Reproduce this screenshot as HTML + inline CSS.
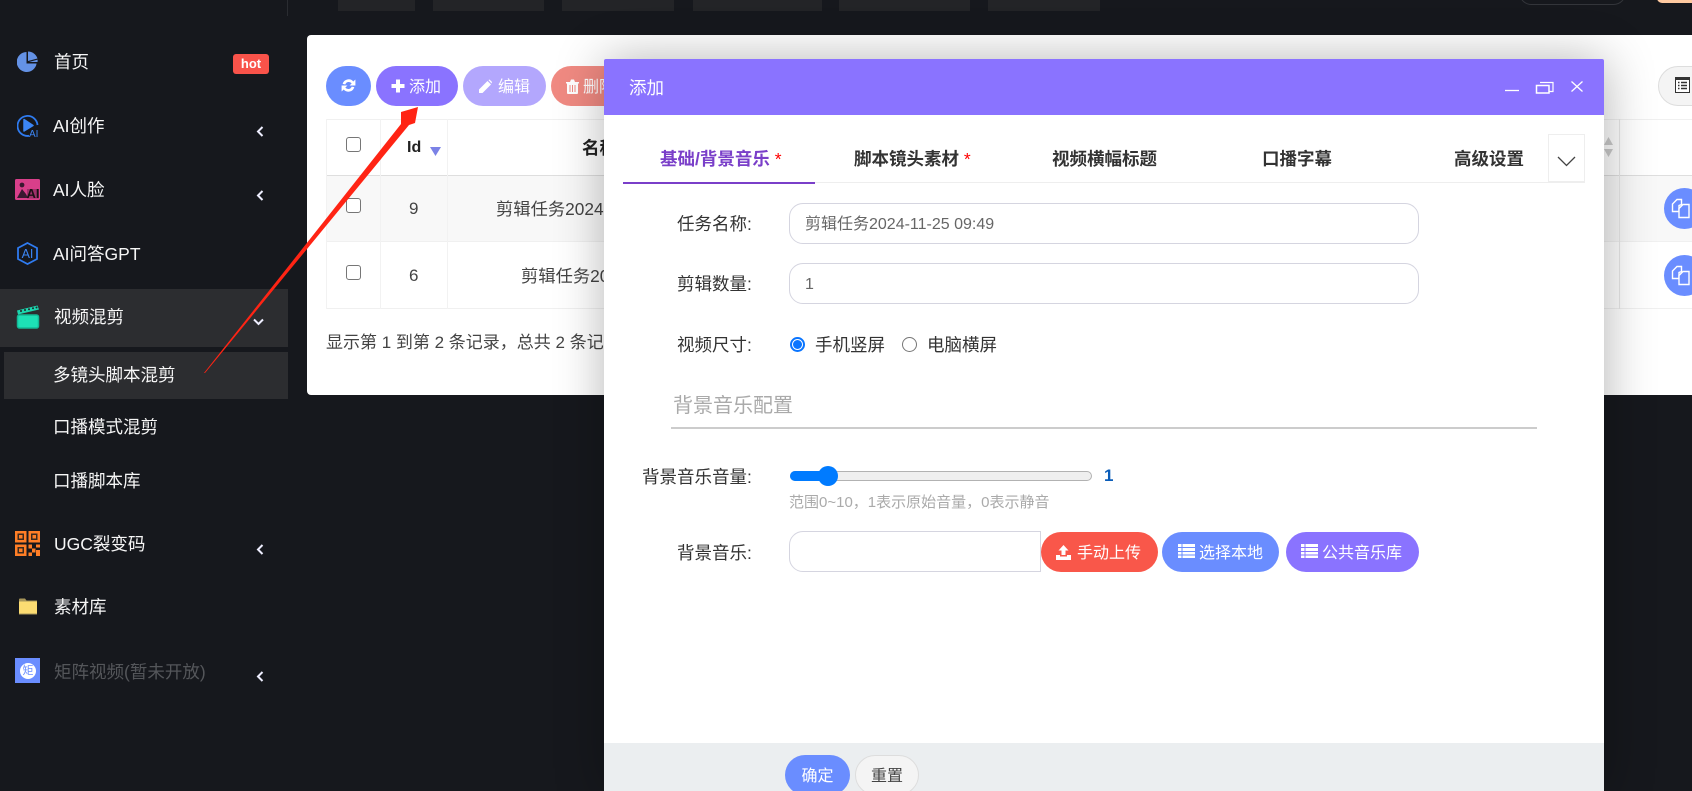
<!DOCTYPE html>
<html lang="zh-CN">
<head>
<meta charset="utf-8">
<title>添加</title>
<style>
*{box-sizing:border-box}
html,body{margin:0;padding:0;width:1692px;height:791px;overflow:hidden;background:#16181d;font-family:"Liberation Sans","Noto Sans CJK SC",sans-serif}
#root{position:absolute;left:0;top:0;width:1692px;height:791px;overflow:hidden;background:#16181d}
.a{position:absolute}
.t{position:absolute;white-space:nowrap;line-height:24px;height:24px}
.s{font-size:17.5px;color:#f6f6f6}
.l{font-size:17.5px;color:#333}
.c{position:absolute;width:15px;height:15px;border:1.5px solid #767676;border-radius:3px;background:#fff;left:346px}
.h{position:absolute;height:1px;background:#e6e6e6}
.b{position:absolute;height:40px;border-radius:20px;color:#fff;font-size:16px;line-height:43px;white-space:nowrap}
.b svg{position:absolute}
.ip{position:absolute;background:#fff;border:1px solid #d5d5e0}
.chev{position:absolute}
.tab{position:absolute;top:147px;font-size:17.5px;font-weight:700;line-height:24px;color:#333;white-space:nowrap}
</style>
</head>
<body>
<div id="root">
<!-- top bar remnants -->
<div class="a" style="left:287px;top:0;width:1px;height:16px;background:#2a2c31"></div>
<div class="a" style="left:338px;top:0;width:77px;height:11px;background:#232427"></div>
<div class="a" style="left:433px;top:0;width:111px;height:11px;background:#232427"></div>
<div class="a" style="left:562px;top:0;width:112px;height:11px;background:#232427"></div>
<div class="a" style="left:693px;top:0;width:129px;height:11px;background:#232427"></div>
<div class="a" style="left:839px;top:0;width:131px;height:11px;background:#232427"></div>
<div class="a" style="left:988px;top:0;width:112px;height:11px;background:#232427"></div>
<div class="a" style="left:1519px;top:-20px;width:107px;height:25px;border:1px solid #33353a;border-radius:14px"></div>
<div class="a" style="left:1657px;top:-10px;width:50px;height:13px;background:#ffc9a0;border-radius:5px"></div>

<!-- sidebar -->
<div class="a" style="left:0;top:289px;width:288px;height:58px;background:#2c2d30"></div>
<div class="a" style="left:4px;top:352px;width:284px;height:47px;background:#2c2d30"></div>

<svg class="a" style="left:17px;top:51px" width="21" height="21" viewBox="0 0 21 21"><path d="M9.500 1A10 10 0 1 0 19.600 12.500H9.500Z" fill="#6492e6"/><path d="M11 0.500A10 10 0 0 1 20.500 7.500L11 10Z" fill="#6492e6"/><path d="M12 11L20.600 8.600A10 10 0 0 1 20.500 11Z" fill="#6492e6"/></svg>
<span class="t s" style="left:54px;top:50px">首页</span>
<div class="a" style="left:233px;top:54px;width:36px;height:20px;background:#f9534a;border-radius:3px;color:#fff;font-size:13px;font-weight:700;line-height:20px;text-align:center">hot</div>

<svg class="a" style="left:17px;top:114px" width="23" height="24" viewBox="0 0 23 24"><path d="M12 21.800A10 10 0 1 1 20.500 11" fill="none" stroke="#2f7bf0" stroke-width="1.800"/><path d="M7 5.500L16 11.500L7 17Z" fill="#3c86f5" stroke="#3c86f5" stroke-width="1.500" stroke-linejoin="round"/><text x="12" y="23" font-size="10" fill="#3c86f5" font-family="Liberation Sans">AI</text></svg>
<span class="t s" style="left:53px;top:114px">AI创作</span>

<svg class="a" style="left:15px;top:179px" width="25" height="21" viewBox="0 0 25 21"><rect width="25" height="21" rx="1.500" fill="#d83f8a"/><circle cx="7" cy="6" r="2.400" fill="#3a1830"/><path d="M2 19L7 10L11 15L13 19Z" fill="#3a1830"/><path d="M12 10H24V19.500H12Z" fill="#3a1830" opacity=".35"/><text x="11.500" y="19" font-size="13" font-weight="700" fill="#1a1014" font-family="Liberation Sans">AI</text></svg>
<span class="t s" style="left:53px;top:178px">AI人脸</span>

<svg class="a" style="left:17px;top:242px" width="21" height="23" viewBox="0 0 21 23"><path d="M10.500 1L20 6V17L10.500 22L1 17V6Z" fill="none" stroke="#2f7bf0" stroke-width="1.800"/><text x="4.600" y="16" font-size="12.500" fill="#3c86f5" font-family="Liberation Sans">AI</text></svg>
<span class="t s" style="left:53px;top:242px">AI问答GPT</span>

<svg class="a" style="left:16px;top:305px" width="24" height="24" viewBox="0 0 24 24"><path d="M1 5.500L21.500 .5L23 4.500L2 9.500Z" fill="#1bd6ae"/><rect x="1.500" y="10" width="21" height="13" rx="2" fill="#1de0b6" stroke="#14b896" stroke-width="1.500"/><g fill="#24262a"><circle cx="5" cy="6" r="1"/><circle cx="9" cy="5" r="1"/><circle cx="13" cy="4.200" r="1"/><circle cx="17" cy="3.200" r="1"/><circle cx="20.500" cy="2.500" r="1"/></g></svg>
<span class="t s" style="left:54px;top:305px">视频混剪</span>
<span class="t s" style="left:53px;top:363px">多镜头脚本混剪</span>
<span class="t s" style="left:53px;top:415px">口播模式混剪</span>
<span class="t s" style="left:53px;top:469px">口播脚本库</span>

<svg class="a" style="left:15px;top:531px" width="25" height="25" viewBox="0 0 25 25"><rect width="11.500" height="11.500" fill="#ff7e26"/><rect x="13.500" width="11.500" height="11.500" fill="#ff7e26"/><rect y="13.500" width="11.500" height="11.500" fill="#ff7e26"/><g fill="#3a2a1e"><rect x="2.500" y="2.500" width="6.500" height="6.500"/><rect x="16" y="2.500" width="6.500" height="6.500"/><rect x="2.500" y="16" width="6.500" height="6.500"/></g><g fill="#ff7e26"><rect x="4" y="4" width="3.500" height="3.500"/><rect x="17.500" y="4" width="3.500" height="3.500"/><rect x="4" y="17.500" width="3.500" height="3.500"/><rect x="13.500" y="13.500" width="3.500" height="4"/><rect x="21" y="13.500" width="4" height="3"/><rect x="17" y="17.500" width="3.500" height="4"/><rect x="13.500" y="21.500" width="3.500" height="3.500"/><rect x="21" y="19" width="4" height="6"/></g></svg>
<span class="t s" style="left:54px;top:532px">UGC裂变码</span>

<svg class="a" style="left:19px;top:598px" width="18" height="17" viewBox="0 0 18 17"><path d="M0 1.500Q0 .5 1 .5H6L7.500 2.500H18V16.500H0Z" fill="#a8965a"/><path d="M0 3.500H18V15.500H0Z" fill="#fcdc72"/></svg>
<span class="t s" style="left:54px;top:595px">素材库</span>

<div class="a" style="left:15px;top:658px;width:25px;height:25px;background:#6a8dff"></div>
<div class="a" style="left:20px;top:663px;width:16px;height:16px;border-radius:50%;background:#fff;color:#6a8dff;font-size:11px;line-height:16px;text-align:center">矩</div>
<span class="t" style="left:54px;top:660px;font-size:17.5px;color:#54565a">矩阵视频(暂未开放)</span>

<svg class="chev" style="left:256px;top:126px" width="8" height="11" viewBox="0 0 8 11"><path d="M6.500 1L2 5.500L6.500 10" fill="none" stroke="#eef" stroke-width="2"/></svg>
<svg class="chev" style="left:256px;top:190px" width="8" height="11" viewBox="0 0 8 11"><path d="M6.500 1L2 5.500L6.500 10" fill="none" stroke="#eef" stroke-width="2"/></svg>
<svg class="chev" style="left:253px;top:318px" width="11" height="8" viewBox="0 0 11 8"><path d="M1 1.500L5.500 6L10 1.500" fill="none" stroke="#eef" stroke-width="2"/></svg>
<svg class="chev" style="left:256px;top:544px" width="8" height="11" viewBox="0 0 8 11"><path d="M6.500 1L2 5.500L6.500 10" fill="none" stroke="#eef" stroke-width="2"/></svg>
<svg class="chev" style="left:256px;top:671px" width="8" height="11" viewBox="0 0 8 11"><path d="M6.500 1L2 5.500L6.500 10" fill="none" stroke="#eef" stroke-width="2"/></svg>

<!-- main card -->
<div class="a" style="left:307px;top:35px;width:1400px;height:360px;background:#fff;border-radius:4px"></div>

<!-- toolbar -->
<div class="b" style="left:326px;top:66px;width:45px;background:#6a8dff"><svg style="left:14px;top:11px" width="17" height="17" viewBox="0 0 16 16"><path d="M2.500 6.500A5.800 5.800 0 0 1 12.500 4.200L14.500 2.300V8H9L11 6A3.500 3.500 0 0 0 5 7Z" fill="#fff"/><path d="M13.500 9.500A5.800 5.800 0 0 1 3.500 11.800L1.500 13.700V8H7L5 10A3.500 3.500 0 0 0 11 9Z" fill="#fff"/></svg></div>
<div class="b" style="left:376px;top:66px;width:82px;background:#8a73ff"><svg style="left:15px;top:13px" width="14" height="14" viewBox="0 0 14 14"><path d="M5 0.500H9V5H13.500V9H9V13.500H5V9H.5V5H5Z" fill="#fff"/></svg><span class="a" style="left:33px">添加</span></div>
<div class="b" style="left:463px;top:66px;width:83px;background:#b3a7fd"><svg style="left:15px;top:13px" width="14" height="15" viewBox="0 0 14 15"><path d="M1 10.500L9.500 2L13 5.500L4.500 14H1Z" fill="#fff"/><path d="M10.500 1L11.500 .5L14 3L13.500 4.500Z" fill="#fff"/></svg><span class="a" style="left:35px">编辑</span></div>
<div class="b" style="left:551px;top:66px;width:90px;background:#f08a82"><svg style="left:15px;top:13px" width="13" height="15" viewBox="0 0 13 15"><path d="M0 3H13V4.500H12V14Q12 15 11 15H2Q1 15 1 14V4.500H0ZM4 3L5 .5H8L9 3ZM3.500 6V13H4.500V6ZM6 6V13H7V6ZM8.500 6V13H9.500V6Z" fill="#fff" fill-rule="evenodd"/></svg><span class="a" style="left:32px">删除</span></div>

<div class="a" style="left:1658px;top:66px;width:60px;height:40px;border-radius:20px;background:#f4f4f4;border:1px solid #ddd"></div>
<svg class="a" style="left:1675px;top:77px" width="15" height="16" viewBox="0 0 15 16"><rect x=".5" y=".5" width="14" height="15" fill="#fff" stroke="#333"/><rect width="15" height="3" fill="#333"/><path d="M3 5.500H4.500M6 5.500H12M3 8.500H4.500M6 8.500H12M3 11.500H4.500M6 11.500H12" stroke="#333" stroke-width="1.500"/></svg>

<!-- table -->
<div class="a" style="left:326px;top:175px;width:1380px;height:66px;background:#f8f8f8"></div>
<div class="h" style="left:326px;top:175px;width:1380px;height:1px;background:#dedede"></div>
<div class="h" style="left:326px;top:241px;width:1380px;background:#f0f0f0"></div>
<div class="a" style="left:326px;top:308px;width:1380px;height:1px;background:#f0f0f0"></div>
<div class="a" style="left:326px;top:119px;width:1380px;height:1px;background:#f0f0f0"></div>
<div class="a" style="left:326px;top:119px;width:1px;height:190px;background:#f2f2f2"></div>
<div class="a" style="left:380px;top:119px;width:1px;height:190px;background:#f2f2f2"></div>
<div class="a" style="left:447px;top:119px;width:1px;height:190px;background:#f2f2f2"></div>
<div class="a" style="left:1619px;top:119px;width:1px;height:190px;background:#e8e8e8"></div>
<div class="c" style="top:137px"></div>
<div class="c" style="top:198px"></div>
<div class="c" style="top:265px"></div>
<span class="t" style="left:407px;top:136px;font-size:16px;font-weight:700;color:#222">Id</span>
<svg class="a" style="left:430px;top:147px" width="11" height="9" viewBox="0 0 11 9"><path d="M0 0H11L5.500 9Z" fill="#7b82e6"/></svg>
<span class="t" style="left:582px;top:136px;font-size:17.5px;font-weight:700;color:#222">名称</span>
<span class="t" style="left:409px;top:197px;font-size:17px;color:#444">9</span>
<span class="t" style="left:409px;top:264px;font-size:17px;color:#444">6</span>
<span class="t" style="left:496px;top:197px;font-size:17.3px;color:#444">剪辑任务2024-11-25 09:49</span>
<span class="t" style="left:521px;top:264px;font-size:17.3px;color:#444">剪辑任务2024</span>
<span class="t" style="left:326px;top:331px;font-size:17px;color:#444">显示第 1 到第 2 条记录，总共 2 条记录</span>
<svg class="a" style="left:1603px;top:137px" width="11" height="20" viewBox="0 0 11 20"><path d="M5.500 0L10 8H1ZM5.500 20L1 12H10Z" fill="#ccc"/></svg>
<div class="a" style="left:1664px;top:188px;width:41px;height:41px;border-radius:50%;background:#6a8dff"></div>
<div class="a" style="left:1664px;top:255px;width:41px;height:41px;border-radius:50%;background:#6a8dff"></div>
<svg class="a" style="left:1671px;top:198px" width="20" height="21" viewBox="0 0 20 21"><path d="M1.500 13.500V6L6 1.500H10.500V6.500L8 7.500V13.500Z" fill="none" stroke="#fff" stroke-width="1.400"/><path d="M8 10.500L12 6.500H18V19.500H8Z" fill="#6a8dff" stroke="#fff" stroke-width="1.400"/></svg>
<svg class="a" style="left:1671px;top:265px" width="20" height="21" viewBox="0 0 20 21"><path d="M1.500 13.500V6L6 1.500H10.500V6.500L8 7.500V13.500Z" fill="none" stroke="#fff" stroke-width="1.400"/><path d="M8 10.500L12 6.500H18V19.500H8Z" fill="#6a8dff" stroke="#fff" stroke-width="1.400"/></svg>

<!-- red arrow -->
<svg class="a" style="left:0;top:0" width="1692" height="791" viewBox="0 0 1692 791"><path d="M204 373L401 124L401 112L418 107L415 123L409 125L205 373Z" fill="#ff2414"/></svg>

<!-- modal -->
<div class="a" style="left:604px;top:59px;width:1000px;height:732px;background:#fff;border-radius:2px 2px 0 0;box-shadow:1px 1px 50px rgba(0,0,0,.3)"></div>
<div class="a" style="left:604px;top:59px;width:1000px;height:56px;background:#8a73ff;border-radius:2px 2px 0 0"></div>
<span class="t" style="left:629px;top:76px;font-size:17.5px;color:#fff">添加</span>
<svg class="a" style="left:1500px;top:78px" width="95" height="20" viewBox="0 0 95 20"><path d="M5 12.500H19" stroke="#fff" stroke-width="1.300"/><path d="M36.500 7.500H49V15H36.500Z" fill="none" stroke="#fff" stroke-width="1.500"/><path d="M40 4.500H53V13.500H49.500" fill="none" stroke="#fff" stroke-width="1.200"/><path d="M71.500 3.500L82.500 13.500M82.500 3.500L71.500 13.500" stroke="#fff" stroke-width="1.300"/></svg>

<!-- tabs -->
<div class="a" style="left:623px;top:182px;width:962px;height:1px;background:#eee"></div>
<div class="a" style="left:623px;top:182px;width:192px;height:1.500px;background:#7a3fc9"></div>
<span class="tab" style="left:660px;color:#7a3fc9">基础/背景音乐 <span style="color:#f00;font-weight:400">*</span></span>
<span class="tab" style="left:854px">脚本镜头素材 <span style="color:#f00;font-weight:400">*</span></span>
<span class="tab" style="left:1052px">视频横幅标题</span>
<span class="tab" style="left:1262px">口播字幕</span>
<span class="tab" style="left:1454px">高级设置</span>
<div class="a" style="left:1548px;top:134px;width:37px;height:48px;border:1px solid #eee;background:#fff"></div>
<svg class="a" style="left:1557px;top:156px" width="19" height="11" viewBox="0 0 19 11"><path d="M1 1L9.500 9.500L18 1" fill="none" stroke="#444" stroke-width="1.300"/></svg>

<!-- form -->
<span class="t l" style="left:677px;top:212px">任务名称:</span>
<div class="ip" style="left:789px;top:203px;width:630px;height:41px;border-radius:14px"></div>
<span class="t" style="left:805px;top:213px;font-size:16px;color:#666">剪辑任务2024-11-25 09:49</span>
<span class="t l" style="left:677px;top:272px">剪辑数量:</span>
<div class="ip" style="left:789px;top:263px;width:630px;height:41px;border-radius:14px"></div>
<span class="t" style="left:805px;top:273px;font-size:16px;color:#666">1</span>
<span class="t l" style="left:677px;top:333px">视频尺寸:</span>
<div class="a" style="left:790px;top:337px;width:15px;height:15px;border-radius:50%;border:2px solid #0a75ff;background:#fff"></div>
<div class="a" style="left:793px;top:340px;width:9px;height:9px;border-radius:50%;background:#0a75ff"></div>
<span class="t" style="left:815px;top:333px;font-size:17.5px;color:#333">手机竖屏</span>
<div class="a" style="left:902px;top:337px;width:15px;height:15px;border-radius:50%;border:1.500px solid #767676;background:#fff"></div>
<span class="t" style="left:927px;top:333px;font-size:17.5px;color:#333">电脑横屏</span>

<span class="t" style="left:673px;top:394px;font-size:20px;color:#aaa">背景音乐配置</span>
<div class="a" style="left:671px;top:427px;width:866px;height:2px;background:#ccc"></div>

<span class="t l" style="left:642px;top:465px">背景音乐音量:</span>
<div class="a" style="left:790px;top:471px;width:302px;height:10px;border-radius:5px;background:#efefef;border:1px solid #b2b2b2"></div>
<div class="a" style="left:790px;top:471px;width:38px;height:10px;border-radius:5px 0 0 5px;background:#007bff"></div>
<div class="a" style="left:818px;top:466px;width:20px;height:20px;border-radius:50%;background:#007bff"></div>
<span class="t" style="left:1104px;top:464px;font-size:17px;font-weight:700;color:#0a5cb8">1</span>
<span class="t" style="left:789px;top:491px;font-size:15px;color:#aaa">范围0~10，1表示原始音量，0表示静音</span>

<span class="t l" style="left:677px;top:541px">背景音乐:</span>
<div class="ip" style="left:789px;top:531px;width:252px;height:41px;border-radius:14px 0 0 14px"></div>
<div class="b" style="left:1041px;top:532px;width:117px;background:#f9574a"><svg style="left:15px;top:12px" width="15" height="16" viewBox="0 0 15 16"><path d="M7.500 1L12.500 6.500H9.500V11H5.500V6.500H2.500Z" fill="#fff"/><path d="M0 11H4V12.500H11V11H15V16H0Z" fill="#fff"/></svg><span class="a" style="left:36px">手动上传</span></div>
<div class="b" style="left:1162px;top:532px;width:117px;background:#6a8dff"><svg style="left:16px;top:12px" width="17" height="14" viewBox="0 0 17 14"><path d="M0 0H17V3H0ZM0 4H17V7H0ZM0 8H17V10.500H0ZM0 11.500H17V14H0Z" fill="#fff"/><path d="M4 0V14" stroke="#6a8dff"/></svg><span class="a" style="left:37px">选择本地</span></div>
<div class="b" style="left:1286px;top:532px;width:133px;background:#8a73ff"><svg style="left:15px;top:12px" width="17" height="14" viewBox="0 0 17 14"><path d="M0 0H17V3H0ZM0 4H17V7H0ZM0 8H17V10.500H0ZM0 11.500H17V14H0Z" fill="#fff"/><path d="M4 0V14" stroke="#8a73ff"/></svg><span class="a" style="left:36px">公共音乐库</span></div>

<!-- footer -->
<div class="a" style="left:604px;top:743px;width:1000px;height:48px;background:#ebeef0"></div>
<div class="b" style="left:785px;top:755px;width:65px;background:#6a8dff;text-align:center">确定</div>
<div class="b" style="left:855px;top:755px;width:64px;background:#f4f4f4;border:1px solid #ddd;color:#444;text-align:center;line-height:41px">重置</div>
</div>
</body>
</html>
